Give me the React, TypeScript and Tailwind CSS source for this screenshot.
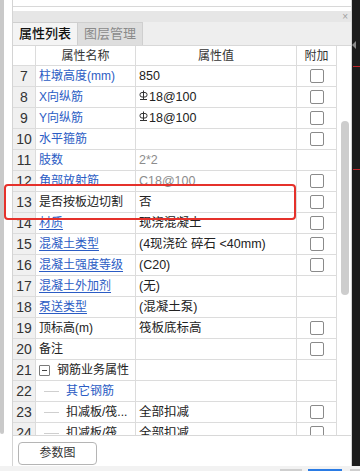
const FONT = "font-['Liberation_Sans','Noto_Sans_CJK_SC',sans-serif]";

type Row = {
  n: number;
  name: string;
  value?: string;
  blue?: boolean;
  link?: boolean;
  muted?: boolean;
  check?: boolean;
  rebar?: boolean;
  kind?: "group" | "child";
};

const rows: Row[] = [
  { n: 7, name: "柱墩高度(mm)", value: "850", blue: true, check: true },
  { n: 8, name: "X向纵筋", value: "18@100", rebar: true, blue: true, check: true },
  { n: 9, name: "Y向纵筋", value: "18@100", rebar: true, blue: true, check: true },
  { n: 10, name: "水平箍筋", blue: true, check: true },
  { n: 11, name: "肢数", value: "2*2", blue: true, muted: true },
  { n: 12, name: "角部放射筋", value: "C18@100", blue: true, muted: true, check: true },
  { n: 13, name: "是否按板边切割", value: "否", check: true },
  { n: 14, name: "材质", value: "现浇混凝土", blue: true, link: true, check: true },
  { n: 15, name: "混凝土类型", value: "(4现浇砼 碎石 <40mm)", blue: true, link: true, check: true },
  { n: 16, name: "混凝土强度等级", value: "(C20)", blue: true, link: true, check: true },
  { n: 17, name: "混凝土外加剂", value: "(无)", blue: true, link: true },
  { n: 18, name: "泵送类型", value: "(混凝土泵)", blue: true, link: true },
  { n: 19, name: "顶标高(m)", value: "筏板底标高", check: true },
  { n: 20, name: "备注", check: true },
  { n: 21, name: "钢筋业务属性", kind: "group" },
  { n: 22, name: "其它钢筋", kind: "child", blue: true },
  { n: 23, name: "扣减板/筏...", value: "全部扣减", kind: "child", check: true },
  { n: 24, name: "扣减板/筏...", value: "全部扣减", kind: "child", check: true },
];

// HRB400 rebar grade mark
function RebarMark() {
  return (
    <svg width="9" height="11" viewBox="0 0 9 11" className="mr-[1px] -mt-[3px]">
      <line x1="4.5" y1="0.5" x2="4.5" y2="9.5" stroke="#333" strokeWidth="1" />
      <rect x="1" y="2.5" width="7" height="4.5" rx="2" fill="none" stroke="#333" strokeWidth="1" />
      <line x1="1" y1="9.5" x2="8" y2="9.5" stroke="#333" strokeWidth="1" />
    </svg>
  );
}

function Checkbox() {
  return <div className="w-[14px] h-[14px] rounded-[2px] border border-[#8a8a8a] bg-white" />;
}

function NameCell({ row }: { row: Row }) {
  const color = row.blue ? "text-[#2b5cc4]" : "text-[#222]";
  if (row.kind === "group") {
    return (
      <div className="flex items-center h-full pl-[3px]">
        <div className="w-[11px] h-[11px] border border-[#7a7a7a] rounded-[1px] flex items-center justify-center">
          <div className="w-[5px] h-px bg-[#444]" />
        </div>
        <span className="ml-[7px] text-[12px] text-[#222]">{row.name}</span>
      </div>
    );
  }
  if (row.kind === "child") {
    return (
      <div className="flex items-center h-full">
        <div className="ml-[8px] w-[15px] h-px bg-[#cfcfcf]" />
        <span className={`ml-[7px] text-[12px] whitespace-nowrap ${color}`}>{row.name}</span>
      </div>
    );
  }
  return (
    <div className="flex items-center h-full pl-[3px]">
      <span className={`text-[12px] whitespace-nowrap ${color} ${row.link ? "underline decoration-[#2b5cc4] underline-offset-2" : ""}`}>
        {row.name}
      </span>
    </div>
  );
}

function TableRow({ row }: { row: Row }) {
  return (
    <div className="flex h-[21px] border-b border-[#dcdcdc]">
      <div className="w-[23px] shrink-0 bg-[#f0f0f0] border-r border-[#dcdcdc] flex items-center justify-center text-[14px] text-[#333]">
        {row.n}
      </div>
      <div className="w-[100px] shrink-0 border-r border-[#dcdcdc] overflow-hidden">
        <NameCell row={row} />
      </div>
      <div
        className={`w-[161px] shrink-0 border-r border-[#dcdcdc] flex items-center pl-[3px] text-[12.5px] whitespace-nowrap overflow-hidden ${
          row.muted ? "text-[#8c8c8c]" : "text-[#222]"
        }`}
      >
        {row.rebar && <RebarMark />}
        {row.value}
      </div>
      <div className="w-[40px] shrink-0 border-r border-[#dcdcdc] flex items-center justify-center">
        {row.check && <Checkbox />}
      </div>
    </div>
  );
}

export default function App() {
  return (
    <div className={`w-[360px] h-[471px] overflow-hidden bg-white flex flex-col ${FONT}`}>
      <div className="flex h-[466px]">
        {/* left neighbour panel scrollbar */}
        <div className="w-[12px] shrink-0">
          <div className="w-[4px] h-[434px] bg-[#c9c9c9] rounded-b-[3px]" />
        </div>

        {/* properties panel */}
        <div className="w-[340px] shrink-0 border-l border-r border-[#d4d4d4] flex flex-col relative">
          <div className="h-[7px] border-b border-[#d8d8d8]" />
          <div className="h-[4px]" />
          <div className="h-[11px] bg-[#e6e6e6] flex items-center justify-end pr-[3px]">
            <span className="text-[10px] leading-none text-[#a0a0a0]">×</span>
          </div>
          <div className="h-[23px] bg-[#eeeeee] flex">
            <div className="w-[65px] bg-[#f4f4f4] border-r border-t border-[#cfcfcf] flex items-center justify-center text-[13px] font-medium text-[#111]">
              属性列表
            </div>
            <div className="w-[65px] bg-[#dedede] border-r border-t border-[#cfcfcf] flex items-center justify-center text-[13px] text-[#8a8a8a]">
              图层管理
            </div>
          </div>

          {/* table */}
          <div className="h-[391px] flex border-t border-b border-[#d8d8d8] overflow-hidden">
            <div className="w-[324px] shrink-0 flex flex-col">
              <div className="flex h-[20px] border-b border-[#dcdcdc] text-[12px] text-[#333] shrink-0">
                <div className="w-[23px] shrink-0 border-r border-[#dcdcdc]" />
                <div className="w-[100px] shrink-0 border-r border-[#dcdcdc] flex items-center justify-center">属性名称</div>
                <div className="w-[161px] shrink-0 border-r border-[#dcdcdc] flex items-center justify-center">属性值</div>
                <div className="w-[40px] shrink-0 border-r border-[#dcdcdc] flex items-center justify-center">附加</div>
              </div>
              {rows.map((r) => (
                <div key={r.n} className="shrink-0">
                  <TableRow row={r} />
                </div>
              ))}
            </div>
            <div className="flex-1 pl-[4px] pt-[75px]">
              <div className="w-[8px] h-[174px] rounded-full bg-[#cdcdcd]" />
            </div>
          </div>

          <div className="flex-1 pt-[4px] pl-[5px]">
            <button
              type="button"
              className="w-[79px] h-[23px] rounded-[4px] border border-[#b5b5b5] bg-white text-[12px] text-[#333]"
            >
              参数图
            </button>
          </div>

          {/* highlight */}
          <div className="absolute left-[-9px] top-[184px] w-[292px] h-[36px] border-2 border-[#e5312b] rounded-[4px]" />
        </div>

        {/* dark right edge */}
        <div className="flex-1 bg-[#1c1c1c] relative">
          <div className="absolute left-0 top-[41px] w-0 h-0 border-y-[4px] border-y-transparent border-r-[4px] border-r-[#8a8a8a]" />
          <div className="absolute left-[1px] right-0 top-[66px] h-px bg-[#c0262a]" />
          <div className="absolute left-[1px] right-0 top-[169px] h-px bg-[#c0262a]" />
        </div>
      </div>

      {/* bottom strip */}
      <div className="flex-1 bg-[#f2f2f2] flex items-end">
        <div className="ml-[280px] w-[22px] h-[2px] bg-[#cfcfcf]" />
        <div className="ml-[6px] w-[34px] h-[2px] bg-[#2a7be4]" />
        <div className="ml-[8px] w-[10px] h-[2px] bg-[#cfcfcf]" />
      </div>
    </div>
  );
}
